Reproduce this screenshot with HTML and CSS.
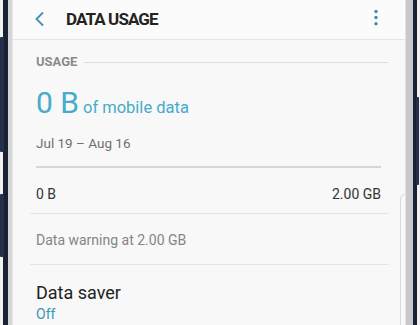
FILE: index.html
```html
<!DOCTYPE html>
<html lang="en">

<head>
    <meta charset="UTF-8">
    <meta name="viewport" content="width=device-width, initial-scale=1.0">
    <title>Data usage</title>
    <link rel="stylesheet" href="styles.css">
</head>

<body>
    <div class="phone">
        <div class="edge light"></div>
        <div class="edge dark"></div>
        <div class="edge glass-left"></div>
        <div class="screen">
            <div class="header">
                <svg class="back" width="12" height="16" viewBox="0 0 12 16">
                    <path d="M9 1.5 L2.5 8 L9 14.5" fill="none" stroke="#3d92b4" stroke-width="1.8" />
                </svg>
                <div class="title">DATA USAGE</div>
                <svg class="more" width="6" height="18" viewBox="0 0 6 18">
                    <circle cx="3" cy="2.5" r="1.7" fill="#3b8fae" />
                    <circle cx="3" cy="8.5" r="1.7" fill="#3b8fae" />
                    <circle cx="3" cy="14.8" r="1.7" fill="#3b8fae" />
                </svg>
            </div>

            <div class="content">
                <div class="section-head">
                    <span>USAGE</span>
                    <div class="rule"></div>
                </div>

                <div class="usage">
                    <span class="big">0 B</span> <span class="of">of mobile data</span>
                </div>
                <div class="dates">Jul 19 – Aug 16</div>
                <div class="bar"></div>
                <div class="scale">
                    <span>0 B</span>
                    <span>2.00 GB</span>
                </div>
            </div>

            <div class="divider"></div>
            <div class="content">
                <div class="warning">Data warning at 2.00 GB</div>
            </div>
            <div class="divider"></div>
            <div class="content">
                <div class="item-title">Data saver</div>
                <div class="item-sub">Off</div>
            </div>
            <div class="curve"></div>
        </div>
        <div class="edge glass-right"></div>
        <div class="edge dark right"></div>
        <div class="edge light"></div>

        <div class="button b1"></div>
        <div class="button b2"></div>
        <div class="button b3"></div>
    </div>
</body>

</html>
```

FILE: styles.css
```css
body {
    margin: 0;
    background: #ffffff;
    font-family: Roboto, "Liberation Sans", sans-serif;
}

.phone {
    position: relative;
    display: flex;
    width: 420px;
    height: 325px;
    overflow: hidden;
}

.edge {
    flex: none;
}

.light {
    width: 3px;
    background: #f1f1f1;
}

.dark {
    width: 5px;
    background: #1a2132;
}

.dark.right {
    width: 4px;
}

.glass-left {
    width: 4px;
    background: #d6d6d8;
    border-right: 1px solid #e8e8e8;
}

.glass-right {
    width: 7px;
    background: #c8c8cb;
    border-left: 1px solid #e2e2e2;
}

.button {
    position: absolute;
    background: #24304a;
    border-radius: 1px;
}

.b1 {
    left: 0;
    top: 37px;
    width: 4px;
    height: 115px;
}

.b2 {
    left: 0;
    top: 194px;
    width: 4px;
    height: 63px;
}

.b3 {
    right: 1px;
    top: 97px;
    width: 3px;
    height: 88px;
}

.screen {
    position: relative;
    flex: 1;
    min-width: 0;
    background: #f8f8f8;
}

.header {
    display: flex;
    align-items: center;
    height: 39px;
    background: #fbfbfb;
    border-bottom: 1px solid #e6e6e6;
}

.back {
    margin-left: 21px;
    margin-top: -2px;
}

.title {
    margin-left: 20px;
    flex: 1;
    font-size: 17px;
    font-weight: bold;
    letter-spacing: -0.9px;
    color: #232323;
    line-height: 37px;
}

.more {
    margin-right: 26px;
    margin-top: -3px;
}

.content {
    padding: 0 24px 0 23px;
}

.section-head {
    display: flex;
    align-items: center;
    margin-top: 14px;
    font-size: 13px;
    font-weight: bold;
    line-height: 16px;
    color: #8a8a8a;
}

.rule {
    flex: 1;
    height: 1px;
    margin-left: 7px;
    margin-right: -7px;
    background: #dcdcdc;
}

.usage {
    margin-top: 17px;
    line-height: 32px;
    color: #47abcb;
}

.big {
    font-size: 30px;
}

.of {
    font-size: 16.5px;
}

.dates {
    margin-top: 10px;
    font-size: 13.5px;
    line-height: 18px;
    color: #6f6f6f;
}

.bar {
    margin-top: 14px;
    height: 2px;
    background: #cfd9dc;
}

.scale {
    display: flex;
    justify-content: space-between;
    margin-top: 17px;
    margin-bottom: 10px;
    font-size: 14px;
    line-height: 18px;
    color: #333333;
}

.divider {
    height: 1px;
    margin: 0 16px 0 17px;
    background: #e4e4e4;
}

.warning {
    padding-top: 17px;
    padding-bottom: 15px;
    font-size: 14px;
    line-height: 18px;
    color: #858585;
}

.item-title {
    padding-top: 17px;
    font-size: 18px;
    line-height: 22px;
    color: #222222;
}

.item-sub {
    margin-top: 1px;
    font-size: 14px;
    line-height: 18px;
    color: #3a95ba;
}

.curve {
    position: absolute;
    right: -2px;
    top: 194px;
    width: 6px;
    height: 140px;
    border-left: 1px solid #d8d8d8;
    border-top: 1px solid #d8d8d8;
    border-top-left-radius: 5px;
}
```
